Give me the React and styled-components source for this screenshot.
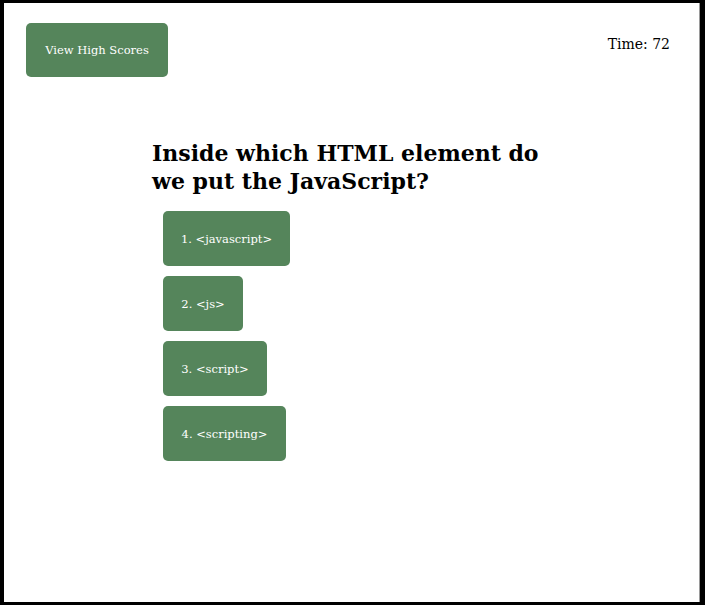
import React from "react";
import styled, { createGlobalStyle } from "styled-components";

const Global = createGlobalStyle`
  html, body { margin: 0; padding: 0; background: #fff; }
  body { font-family: Georgia, "DejaVu Serif", serif; color: #000; }
`;

const Frame = styled.div`
  box-sizing: border-box;
  width: 705px;
  height: 605px;
  border-style: solid;
  border-color: #000;
  border-width: 3px 5px 3px 4px;
  box-shadow: inset -1px 0 0 #9a9a9a;
  display: flex;
  flex-direction: column;
`;

const Header = styled.header`
  display: flex;
  justify-content: space-between;
  align-items: flex-start;
  padding: 20px 30px 0 22px;
`;

const Button = styled.button`
  font-family: inherit;
  font-size: 11.5px;
  color: #fff;
  background: #55855b;
  border: none;
  border-radius: 5px;
  cursor: pointer;
  height: ${(p) => p.$h}px;
  width: ${(p) => p.$w}px;
  padding: 0;
  text-align: center;
`;

const Timer = styled.div`
  font-size: 14px;
  margin-top: 13px;
`;

const Quiz = styled.main`
  width: 400px;
  margin: 0 auto;
  padding-top: 62px;
`;

const Question = styled.h2`
  font-size: 22px;
  line-height: 28px;
  font-weight: bold;
  margin: 0 0 16px 0;
`;

const Choices = styled.div`
  display: flex;
  flex-direction: column;
  align-items: flex-start;
  gap: 10px;
  padding-left: 11px;
`;

const choices = [
  { t: "1. <javascript>", w: 127 },
  { t: "2. <js>", w: 80 },
  { t: "3. <script>", w: 104 },
  { t: "4. <scripting>", w: 123 },
];

export default function App() {
  return (
    <>
      <Global />
      <Frame>
        <Header>
          <Button $w={142} $h={54}>View High Scores</Button>
          <Timer>Time: 72</Timer>
        </Header>
        <Quiz>
          <Question>Inside which HTML element do we put the JavaScript?</Question>
          <Choices>
            {choices.map((c) => (
              <Button key={c.t} $w={c.w} $h={55}>{c.t}</Button>
            ))}
          </Choices>
        </Quiz>
      </Frame>
    </>
  );
}
